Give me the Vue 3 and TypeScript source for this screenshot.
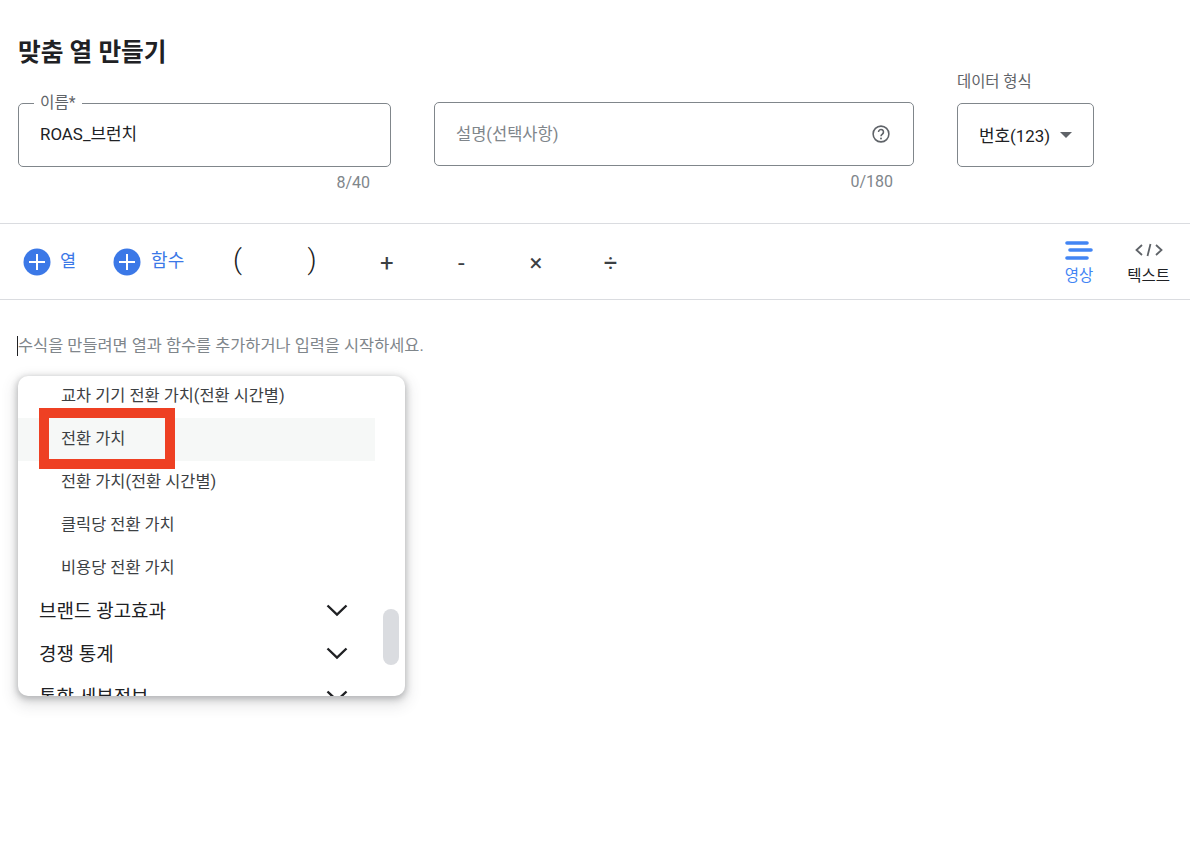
<script setup lang="ts">
const ops = ['(', ')', '+', '-', '×', '÷']

const subItems = [
  '교차 기기 전환 가치(전환 시간별)',
  '전환 가치',
  '전환 가치(전환 시간별)',
  '클릭당 전환 가치',
  '비용당 전환 가치',
]

const groups = ['브랜드 광고효과', '경쟁 통계', '통합 세부정보']
</script>

<template>
  <div class="page">
    <h1 class="title">맞춤 열 만들기</h1>

    <div class="fields">
      <div class="field name-field">
        <div class="box">
          <span class="notch">이름*</span>
          <span class="value">ROAS_브런치</span>
        </div>
        <div class="count">8/40</div>
      </div>
      <div class="field desc-field">
        <div class="box">
          <span class="placeholder">설명(선택사항)</span>
          <svg class="help" viewBox="0 0 24 24" width="22" height="22">
            <circle cx="12" cy="12" r="8.6" fill="none" stroke="#5f6368" stroke-width="1.7" />
            <path d="M9.3 9.8a2.7 2.7 0 1 1 4.3 2.2c-.9.7-1.6 1.2-1.6 2.4" fill="none" stroke="#5f6368" stroke-width="1.7" />
            <circle cx="12" cy="16.9" r="1.05" fill="#5f6368" />
          </svg>
        </div>
        <div class="count">0/180</div>
      </div>
      <div class="field type-field">
        <div class="type-label">데이터 형식</div>
        <div class="box">
          <span class="value select-value">번호(123)</span>
          <span class="caret"></span>
        </div>
      </div>
    </div>

    <div class="toolbar">
      <button class="add first">
        <svg viewBox="0 0 28 28" width="28" height="28">
          <circle cx="14" cy="14" r="13.5" fill="#3b78e7" />
          <path d="M14 6v16M6 14h16" stroke="#fff" stroke-width="2" />
        </svg>
        <span>열</span>
      </button>
      <button class="add second">
        <svg viewBox="0 0 28 28" width="28" height="28">
          <circle cx="14" cy="14" r="13.5" fill="#3b78e7" />
          <path d="M14 6v16M6 14h16" stroke="#fff" stroke-width="2" />
        </svg>
        <span>함수</span>
      </button>
      <div class="ops">
        <span
          v-for="(op, i) in ops"
          :key="op"
          class="op"
          :class="{ paren: i < 2 }"
        >{{ op }}</span>
      </div>
      <div class="modes">
        <div class="mode active">
          <svg viewBox="0 0 28 20" width="28" height="20">
            <path d="M2 3h20M5 10h21M2 18h20" stroke="#4285f4" stroke-width="3.6" stroke-linecap="round" fill="none" />
          </svg>
          <span>영상</span>
        </div>
        <div class="mode">
          <svg viewBox="0 0 28 20" width="28" height="20">
            <path d="M7 5l-5.500 5 5.500 5M21 5l5.500 5-5.500 5M15.500 4l-3 12" stroke="#5f6368" stroke-width="1.800" fill="none" />
          </svg>
          <span>텍스트</span>
        </div>
      </div>
    </div>

    <div class="editor">
      <div class="hint"><i class="cursor"></i>수식을 만들려면 열과 함수를 추가하거나 입력을 시작하세요.</div>

      <div class="menu">
        <div class="list">
          <div
            v-for="(item, i) in subItems"
            :key="item"
            class="row sub"
            :class="{ hover: i === 1 }"
          >
            {{ item }}
          </div>
          <div v-for="g in groups" :key="g" class="row group">
            <span>{{ g }}</span>
            <svg class="chevron" viewBox="0 0 24 14" width="24" height="14">
              <path d="M2.500 2.500L12 11.500l9.500-9" stroke="#202124" stroke-width="2.400" fill="none" />
            </svg>
          </div>
        </div>
        <div class="thumb"></div>
      </div>

      <div class="callout"></div>
    </div>
  </div>
</template>

<style scoped>
.page {
  width: 1190px;
  height: 842px;
  background: #fff;
  overflow: hidden;
  font-family: Roboto, "Noto Sans CJK KR", sans-serif;
  color: #202124;
}

.title {
  margin: 0;
  padding: 37px 0 0 18px;
  height: 67px;
  box-sizing: border-box;
  font-size: 24.700px;
  line-height: 32px;
  font-weight: 700;
  color: #202124;
}

.fields {
  display: flex;
  height: 156px;
  border-bottom: 1px solid #dadce0;
  padding-left: 18px;
  box-sizing: content-box;
}

.box {
  position: relative;
  display: flex;
  align-items: center;
  box-sizing: border-box;
  height: 64px;
  border: 1px solid #80868b;
  border-radius: 5px;
}

.name-field {
  width: 373px;
  margin-top: 36px;
}

.desc-field {
  width: 480px;
  margin-top: 35px;
  margin-left: 43px;
}

.type-field {
  width: 137px;
  margin-top: 3px;
  margin-left: 43px;
}

.name-field .box {
  padding: 0 21px 5px;
}

.desc-field .box {
  padding: 0 21px 0;
  justify-content: space-between;
}

.notch {
  position: absolute;
  left: 15px;
  top: -10px;
  padding: 0 6px;
  background: #fff;
  font-size: 15.700px;
  line-height: 18px;
  color: #5f6368;
}

.value {
  font-size: 16.900px;
  color: #202124;
}

.select-value {
  font-size: 16.900px;
  margin-bottom: 1px;
}

.placeholder {
  font-size: 16.500px;
  color: #80868b;
  margin-bottom: 2px;
}

.help {
  margin-right: 0;
  margin-bottom: 1px;
}

.count {
  margin-top: 7px;
  padding-right: 21px;
  text-align: right;
  font-size: 16px;
  line-height: 18px;
  color: #80868b;
}

.type-label {
  height: 33px;
  padding-top: 1px;
  box-sizing: border-box;
  font-size: 15.400px;
  line-height: 22px;
  color: #5f6368;
}

.type-field .box {
  padding: 0 21px 0 21px;
  justify-content: space-between;
}

.caret {
  width: 0;
  height: 0;
  border-left: 6.500px solid transparent;
  border-right: 6.500px solid transparent;
  border-top: 6.500px solid #5f6368;
}

.toolbar {
  display: flex;
  align-items: center;
  height: 75px;
  border-bottom: 1px solid #dadce0;
  padding-left: 23px;
}

.add {
  display: flex;
  align-items: center;
  gap: 9px;
  padding: 0;
  border: 0;
  background: none;
  font: inherit;
  font-size: 17.500px;
  color: #3b78e7;
}

.add span {
  margin-bottom: 5px;
}

.add.second {
  margin-left: 37px;
  gap: 10px;
  font-size: 18px;
}

.ops {
  display: flex;
  margin-left: 16px;
  margin-top: 2px;
}

.op {
  width: 74.600px;
  text-align: center;
  font-size: 24px;
  line-height: 28px;
  color: #3c4043;
}

.op.paren {
  font-size: 28px;
  font-weight: 300;
  color: #202124;
  margin-top: -3px;
}

.modes {
  display: flex;
  margin-left: auto;
  padding-right: 20px;
  gap: 34px;
}

.mode {
  display: flex;
  flex-direction: column;
  align-items: center;
  gap: 6px;
  margin-top: 2px;
  font-size: 15.500px;
  line-height: 20px;
  color: #202124;
}

.mode.active {
  color: #4285f4;
}

.editor {
  position: relative;
  height: 542px;
}

.hint {
  position: absolute;
  left: 18px;
  top: 34px;
  font-size: 16.400px;
  line-height: 24px;
  color: #80868b;
}

.cursor {
  position: absolute;
  left: -1px;
  top: 2px;
  width: 1px;
  height: 20px;
  background: #202124;
}

.menu {
  position: absolute;
  left: 18px;
  top: 76px;
  width: 387px;
  height: 320px;
  border-radius: 10px;
  background: #fff;
  overflow: hidden;
  box-shadow: 0 2px 6px 1px rgba(60, 64, 67, 0.3), 0 6px 14px 4px rgba(60, 64, 67, 0.13);
}

.list {
  width: 357px;
  margin-top: -1px;
}

.row {
  display: flex;
  align-items: center;
  height: 43px;
  box-sizing: border-box;
  padding-bottom: 5px;
}

.sub {
  padding-left: 43px;
  font-size: 16.400px;
  color: #3c4043;
}

.sub.hover {
  background: #f6f8f7;
}

.group {
  justify-content: space-between;
  padding: 0 26px 5px 21px;
  font-size: 19px;
  color: #202124;
}

.chevron {
  margin-top: 2px;
}

.thumb {
  position: absolute;
  left: 365px;
  top: 233px;
  width: 16px;
  height: 56px;
  border-radius: 8px;
  background: #dadce0;
}

.callout {
  position: absolute;
  left: 39px;
  top: 108px;
  width: 136px;
  height: 61px;
  box-sizing: border-box;
  border: 10px solid #ee4023;
}
</style>
